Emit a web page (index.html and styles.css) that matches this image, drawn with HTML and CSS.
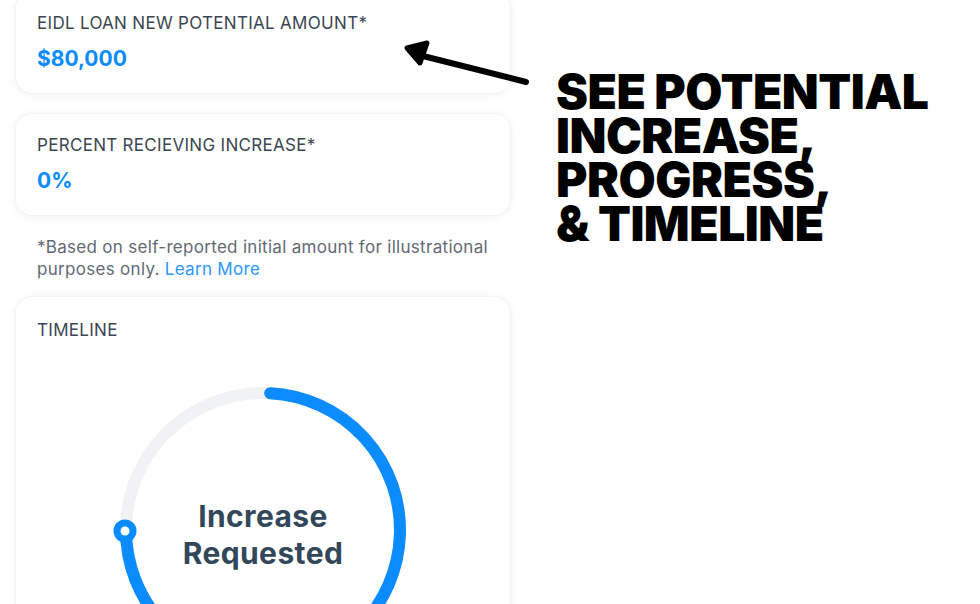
FILE: index.html
```html
<!DOCTYPE html>
<html>
<head>
<meta charset="utf-8">
<link rel="stylesheet" href="styles.css">
</head>
<body>
<div class="page">
  <main class="stack">
    <section class="card card-first">
      <div class="label">EIDL LOAN NEW POTENTIAL AMOUNT*</div>
      <div class="value">$80,000</div>
    </section>
    <section class="card">
      <div class="label">PERCENT RECIEVING INCREASE*</div>
      <div class="value">0%</div>
    </section>
    <p class="note">*Based on self-reported initial amount for illustrational purposes only. <span class="link">Learn More</span></p>
    <section class="card card-timeline">
      <div class="label">TIMELINE</div>
      <div class="ring">
        <svg class="ring-svg" width="300" height="300" viewBox="0 0 300 300">
          <circle cx="150" cy="150" r="137" fill="none" stroke="#f1f2f4" stroke-width="12"/>
          <path d="M157.2 13.2 A137 137 0 1 1 13 150" fill="none" stroke="#0a8cff" stroke-width="12" stroke-linecap="round"/>
          <circle cx="12" cy="151" r="11.5" fill="#0a8cff"/>
          <circle cx="12" cy="151" r="4.5" fill="#fff"/>
        </svg>
        <div class="ring-text">Increase<br>Requested</div>
      </div>
    </section>
  </main>
  <aside class="callout">
    <h1 class="headline"><span class="hl">SEE POTENTIAL</span><span class="hl">INCREASE,</span><span class="hl">PROGRESS,</span><span class="hl">&amp; TIMELINE</span></h1>
  </aside>
</div>
<svg class="arrow" width="140" height="60" viewBox="0 0 140 60">
  <line x1="25" y1="21" x2="128" y2="47" stroke="#000" stroke-width="6" stroke-linecap="round"/>
  <polygon points="9,13 29,8 22,28" fill="#000" stroke="#000" stroke-width="5" stroke-linejoin="round"/>
</svg>
</body>
</html>
```
FILE: styles.css
```css
html, body {
  margin: 0;
  padding: 0;
  background: #ffffff;
}
body {
  width: 980px;
  height: 604px;
  overflow: hidden;
  position: relative;
  font-family: Inter, "Liberation Sans", Arial, sans-serif;
}
.page {
  display: flex;
  align-items: flex-start;
}
.stack {
  width: 494px;
  margin-left: 16px;
  margin-top: -8px;
  display: flex;
  flex-direction: column;
}
.card {
  background: #fff;
  border-radius: 16px;
  box-shadow: 0 1px 10px rgba(20, 40, 60, 0.07), 0 0 0 1px rgba(20, 40, 60, 0.025);
  padding: 21px 21px 22px;
  margin-bottom: 21px;
}
.label {
  font-size: 17px;
  line-height: 20px;
  color: #3b4652;
  letter-spacing: 0.3px;
}
.value {
  margin-top: 14px;
  font-size: 21px;
  line-height: 24px;
  font-weight: 700;
  color: #0a8cff;
}
.note {
  margin: 0 0 17px;
  padding: 0 21px;
  font-size: 17px;
  line-height: 22px;
  color: #5f6a74;
  letter-spacing: 0.3px;
}
.link {
  color: #2a96ff;
}
.card-timeline {
  margin-bottom: 0;
  padding-top: 23px;
  height: 400px;
}
.ring {
  display: grid;
  justify-items: center;
  margin-top: 40px;
}
.ring-svg {
  grid-area: 1 / 1;
  display: block;
}
.ring-text {
  grid-area: 1 / 1;
  margin-top: 118px;
  text-align: center;
  font-weight: 700;
  font-size: 30px;
  line-height: 37px;
  color: #33475a;
  letter-spacing: 0.4px;
}
.callout {
  padding-left: 46px;
  padding-top: 70px;
}
.headline {
  margin: 0;
  font-weight: 900;
  font-size: 48px;
  line-height: 44px;
  color: #000;
  letter-spacing: -0.5px;
}
.hl {
  display: block;
  height: 44px;
}
.arrow {
  position: absolute;
  left: 398px;
  top: 35px;
}
```
